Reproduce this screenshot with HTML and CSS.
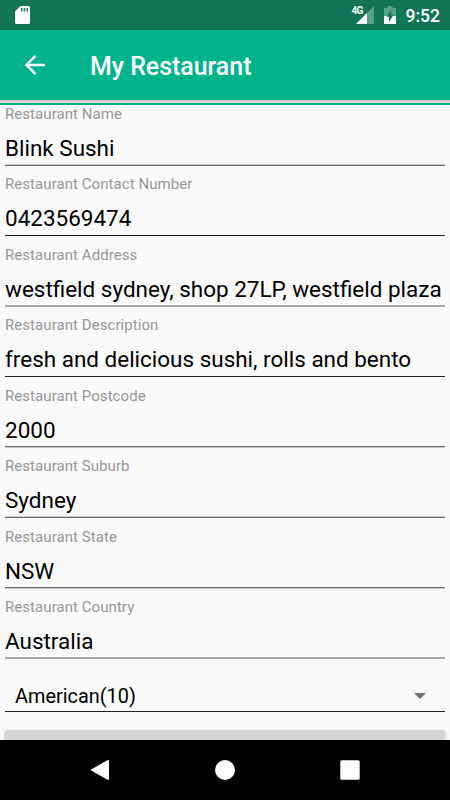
FILE: index.html
```html
<!DOCTYPE html>
<html lang="en">
<head>
<meta charset="utf-8">
<title>My Restaurant</title>
<link rel="stylesheet" href="styles.css">
</head>
<body>
<div class="screen">
  <header class="status">
    <svg class="sd" width="15" height="18" viewBox="0 0 15 18"><path fill="#fff" fill-rule="evenodd" d="M5.500 0H13.500Q15 0 15 1.500V16.500Q15 18 13.500 18H1.500Q0 18 0 16.500V5.500ZM6 2V5.500H7.500V2ZM8.700 2V5.500H10.200V2ZM11.500 2V5.500H13V2Z"/></svg>
    <div class="signal"><span class="net">4G</span>
      <svg width="18" height="18" viewBox="0 0 18 18"><path fill="#fff" opacity=".3" d="M18 0V18H0Z"/><path fill="#fff" d="M11 7V18H0Z"/></svg>
    </div>
    <svg class="battery" width="12" height="18" viewBox="0 0 12 18"><path fill="#fff" opacity=".3" d="M3.500 0H8.500V2H12V10H0V2H3.500Z"/><path fill="#fff" d="M0 10H12V18H0Z"/><path fill="#117656" d="M7.200 4V9H9.500L5 16V11H2.700Z"/></svg>
    <span class="clock">9:52</span>
  </header>
  <div class="toolbar">
    <svg width="20" height="20" viewBox="0 0 20 20"><path fill="none" stroke="#fff" stroke-width="2.400" d="M20 10H2M10.500 .9L1.500 10L10.500 19.100"/></svg>
    <h1>My Restaurant</h1>
  </div>
  <div class="shade"></div>
  <main>
    <label class="field line-low"><span>Restaurant Name</span><b>Blink Sushi</b></label>
    <label class="field"><span>Restaurant Contact Number</span><b>0423569474</b></label>
    <label class="field line-even"><span>Restaurant Address</span><b>westfield sydney, shop 27LP, westfield plaza</b></label>
    <label class="field"><span>Restaurant Description</span><b>fresh and delicious sushi, rolls and bento</b></label>
    <label class="field line-high"><span>Restaurant Postcode</span><b>2000</b></label>
    <label class="field line-low"><span>Restaurant Suburb</span><b>Sydney</b></label>
    <label class="field line-high"><span>Restaurant State</span><b>NSW</b></label>
    <label class="field line-even"><span>Restaurant Country</span><b>Australia</b></label>
    <div class="spinner"><span>American(10)</span><svg width="12" height="6" viewBox="0 0 12 6"><path fill="#707070" d="M0 0H12L6 6Z"/></svg></div>
    <div class="button"></div>
  </main>
  <nav>
    <svg width="18" height="20" viewBox="0 0 18 20"><path fill="#fff" stroke="#fff" stroke-width="2" stroke-linejoin="round" d="M17 1V19L1 10Z"/></svg>
    <svg width="20" height="20" viewBox="0 0 20 20"><circle cx="10" cy="10" r="10" fill="#fff"/></svg>
    <svg width="20" height="20" viewBox="0 0 20 20"><rect x=".3" y=".3" width="19.400" height="19.400" rx="1.500" fill="#fff"/></svg>
  </nav>
</div>
</body>
</html>
```
FILE: styles.css
```css
* { box-sizing: border-box; }
body { margin: 0; font-family: Roboto, sans-serif; }
svg { display: block; flex: none; }
.screen { width: 450px; height: 800px; display: flex; flex-direction: column; overflow: hidden; background: #fafafa; }
.status { height: 30px; flex: none; display: flex; align-items: center; padding: 0 10px 0 15px; background: #117656; color: #fff; }
.sd { margin-right: auto; }
.signal { display: flex; }
.net { font-size: 10px; line-height: 10px; font-weight: 700; letter-spacing: -0.7px; margin-right: -7px; }
.battery { margin: 0 10px; }
.clock { font-size: 17.5px; font-weight: 500; line-height: 30px; padding-top: 1px; }
.toolbar { height: 70px; flex: none; display: flex; align-items: center; padding-left: 25px; background: #03b38c; color: #fff; }
.toolbar h1 { margin: 4px 0 0 45px; font-size: 24.9px; line-height: 30px; font-weight: 500; }
.shade { height: 5px; flex: none; background: linear-gradient(#c4c4c4 0 1px, #d0d0d0 1px 2px, #e0e0e0 2px 3px, #03a882 3px); }
main { flex: 1; min-height: 0; overflow: hidden; padding: 0 5px; }
.field { display: flex; flex-direction: column; height: 71px; color: #000; white-space: nowrap; }
.field:nth-child(even) { height: 70px; }
.field:first-child { height: 61px; }
.field span { padding-top: 10px; font-size: 15px; letter-spacing: 0.06px; line-height: 18px; color: #979797; }
.field:nth-child(even) span { padding-top: 9px; }
.field:first-child span { padding-top: 0; }
.field b { flex: 1; padding-top: 12px; font-size: 22.48px; line-height: 26px; font-weight: 400; border-bottom: 1px solid #222; }
.field.line-low b { border-color: #666; box-shadow: inset 0 -1px #d0d0d0; }
.field.line-high b { border-color: #c8c8c8; box-shadow: inset 0 -1px #6c6c6c; }
.field.line-even b { border-color: #a0a0a0; box-shadow: inset 0 -1px #b0b0b0; }
.spinner { height: 46px; margin-top: 7px; padding: 15px 19px 0 10px; display: flex; align-items: center; justify-content: space-between; font-size: 19.9px; border-bottom: 1px solid #222; }
.button { height: 50px; margin-top: 18px; border-radius: 3px; background: #d5d7d6; box-shadow: 0 1px 3px #0004; }
nav { height: 60px; flex: none; display: flex; align-items: center; justify-content: space-between; padding: 0 90px 0 91px; background: #000; }
```
